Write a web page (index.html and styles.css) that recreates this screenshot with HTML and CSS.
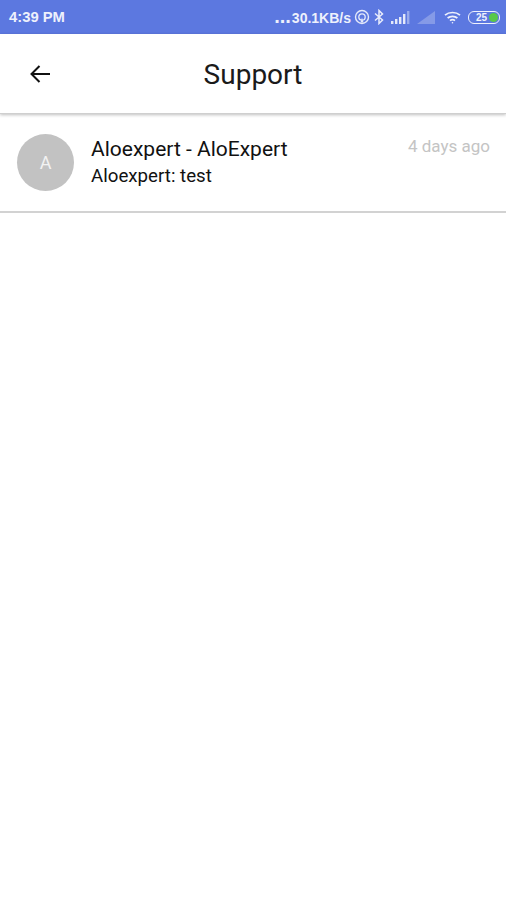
FILE: index.html
```html
<!DOCTYPE html>
<html>
  <head>
    <title>Support</title>
    <meta name="viewport" content="width=device-width, initial-scale=1.0"/>
    <link rel="stylesheet" href="styles.css">
  </head>
  <body>

    <div class="status-bar">
      <span class="status-time">4:39 PM</span>
      <div class="status-icons">
        <span class="status-speed"><span class="status-dots">...</span>30.1KB/s</span>
        <svg class="icon-hotspot" width="16" height="16" viewBox="0 0 16 16" fill="none" stroke="#e4e9fa">
          <circle cx="8" cy="8" r="6.5" stroke-width="1.4"/>
          <circle cx="8" cy="8" r="3.2" stroke-width="1.3"/>
          <path d="M6.5 13.5 L8 8.5 L9.5 13.5 Z" fill="#e4e9fa" stroke="none"/>
        </svg>
        <svg class="icon-bluetooth" width="10" height="16" viewBox="0 0 10 16" fill="none" stroke="#e8ecfb" stroke-width="1.5">
          <path d="M1 4.5 L8.5 11 L5 14.5 V1.5 L8.5 5 L1 11.5"/>
        </svg>
        <svg class="icon-signal" width="19" height="13" viewBox="0 0 19 13" fill="#e4e9fa">
          <rect x="0" y="10" width="2.4" height="3"/>
          <rect x="4" y="8" width="2.4" height="5"/>
          <rect x="8" y="6" width="2.4" height="7"/>
          <rect x="12" y="3" width="2.4" height="10"/>
          <rect x="16" y="0" width="2.4" height="13" opacity="0.45"/>
        </svg>
        <svg class="icon-signal-off" width="19" height="13" viewBox="0 0 19 13" fill="#e4e9fa" opacity="0.3">
          <path d="M0 13 L18 0 V13 Z"/>
        </svg>
        <svg class="icon-wifi" width="17" height="13" viewBox="0 0 17 13" fill="none" stroke="#eef1fc" stroke-width="1.7">
          <path d="M1 4.2 C5 0.6 12 0.6 16 4.2"/>
          <path d="M3.6 7 C6.3 4.7 10.7 4.7 13.4 7"/>
          <path d="M6 9.6 C7.4 8.6 9.6 8.6 11 9.6"/>
          <circle cx="8.5" cy="11.7" r="0.8" fill="#eef1fc" stroke="none"/>
        </svg>
        <div class="battery">
          <span class="battery-level">25</span>
          <span class="battery-dot"></span>
        </div>
      </div>
    </div>

    <div class="app-bar">
      <svg class="back-icon" width="22" height="22" viewBox="0 0 22 22" fill="none" stroke="#111" stroke-width="2">
        <path d="M21 11 H2.5"/>
        <path d="M10.5 3 L2.5 11 L10.5 19"/>
      </svg>
      <h1 class="app-title">Support</h1>
    </div>

    <div class="thread">
      <div class="avatar">A</div>
      <div class="thread-body">
        <div class="thread-name">Aloexpert - AloExpert</div>
        <div class="thread-message">Aloexpert: test</div>
      </div>
      <div class="thread-time">4 days ago</div>
    </div>

  </body>
</html>
```

FILE: styles.css
```css
html, body {
    height: 100%;
}

body {
    margin: 0;

    font-family: Roboto, sans-serif;
    color: #111;

    background: #fff;
}

.status-bar {
    display: flex;
    justify-content: space-between;
    align-items: center;
    box-sizing: border-box;
    height: 34px;
    padding: 0 6px 0 9px;

    font-family: "Liberation Sans", sans-serif;
    font-size: 14px;
    font-weight: 700;
    color: #eef1fc;

    background: #5c78e0;
}

.status-time {
    font-size: 14.8px;
}

.status-icons {
    display: flex;
    align-items: center;
}

.status-speed {
    line-height: 16px;
}

.status-dots {
    margin-right: 1px;

    font-size: 20px;
    line-height: 16px;
}

.icon-hotspot {
    margin-left: 3px;
}

.icon-bluetooth {
    margin-left: 4px;
}

.icon-signal {
    margin-left: 7px;
}

.icon-signal-off {
    margin-left: 7px;
}

.icon-wifi {
    margin-left: 8px;
}

.battery {
    display: flex;
    align-items: center;
    justify-content: space-between;
    box-sizing: border-box;
    width: 32px;
    height: 13px;
    margin-left: 7px;
    padding: 0 1px 0 7px;

    border: 1px solid #eef1fc;
    border-radius: 6px;

    font-size: 10px;
    line-height: 11px;
}

.battery-dot {
    width: 9px;
    height: 9px;

    border-radius: 50%;

    background: #58c84a;
}

.app-bar {
    display: flex;
    align-items: center;
    justify-content: center;
    position: relative;
    height: 79px;

    border-bottom: 1px solid #cfcfcf;
    box-shadow: 0 1px 3px rgba(0, 0, 0, 0.25);
}

.back-icon {
    position: absolute;
    left: 29px;
    top: 29px;
}

.app-title {
    margin: 2px 0 0 0;

    font-size: 28px;
    font-weight: 400;
    color: #1a1a1a;
}

.thread {
    display: flex;
    align-items: flex-start;
    box-sizing: border-box;
    height: 99px;
    padding: 20px 16px 0 17px;

    border-bottom: 2px solid #d2d2d2;
}

.avatar {
    display: flex;
    align-items: center;
    justify-content: center;
    flex-shrink: 0;
    width: 57px;
    height: 57px;

    border-radius: 50%;

    font-size: 18px;
    color: #f2f2f2;

    background: #c2c2c2;
}

.thread-body {
    flex: 1;
    margin-left: 17px;
}

.thread-name {
    margin-top: 2px;

    font-size: 21px;
    line-height: 26px;
}

.thread-message {
    margin-top: 2px;

    font-size: 18.7px;
    line-height: 25px;
}

.thread-time {
    font-size: 17px;
    line-height: 24px;
    color: #c4c4c4;
}
```
